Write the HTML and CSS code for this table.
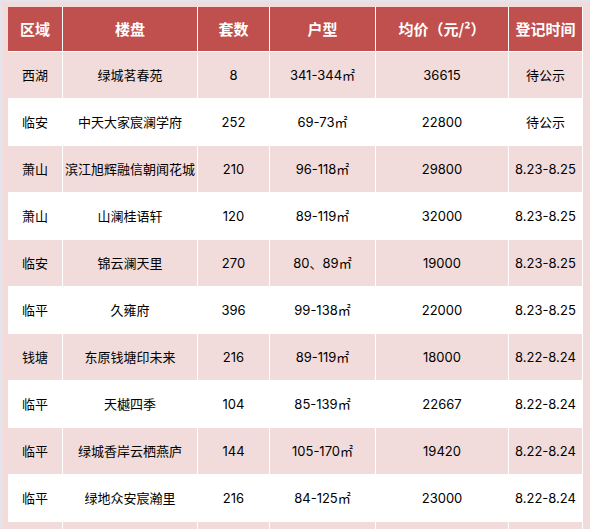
FILE: index.html
```html
<!DOCTYPE html>
<html lang="zh-CN">
<head>
<meta charset="utf-8">
<title>楼盘登记</title>
<link rel="stylesheet" href="styles.css">
</head>
<body>
<div class="page">
  <table class="grid">
    <colgroup>
      <col class="c1"><col class="c2"><col class="c3"><col class="c4"><col class="c5"><col class="c6">
    </colgroup>
    <thead>
      <tr><th>区域</th><th>楼盘</th><th>套数</th><th>户型</th><th>均价（元/²）</th><th>登记时间</th></tr>
    </thead>
    <tbody>
      <tr class="odd"><td>西湖</td><td>绿城茗春苑</td><td>8</td><td>341-344㎡</td><td>36615</td><td>待公示</td></tr>
      <tr><td>临安</td><td>中天大家宸澜学府</td><td>252</td><td>69-73㎡</td><td>22800</td><td>待公示</td></tr>
      <tr class="odd"><td>萧山</td><td>滨江旭辉融信朝闻花城</td><td>210</td><td>96-118㎡</td><td>29800</td><td>8.23-8.25</td></tr>
      <tr><td>萧山</td><td>山澜桂语轩</td><td>120</td><td>89-119㎡</td><td>32000</td><td>8.23-8.25</td></tr>
      <tr class="odd"><td>临安</td><td>锦云澜天里</td><td>270</td><td>80、89㎡</td><td>19000</td><td>8.23-8.25</td></tr>
      <tr><td>临平</td><td>久雍府</td><td>396</td><td>99-138㎡</td><td>22000</td><td>8.23-8.25</td></tr>
      <tr class="odd"><td>钱塘</td><td>东原钱塘印未来</td><td>216</td><td>89-119㎡</td><td>18000</td><td>8.22-8.24</td></tr>
      <tr><td>临平</td><td>天樾四季</td><td>104</td><td>85-139㎡</td><td>22667</td><td>8.22-8.24</td></tr>
      <tr class="odd"><td>临平</td><td>绿城香岸云栖燕庐</td><td>144</td><td>105-170㎡</td><td>19420</td><td>8.22-8.24</td></tr>
      <tr><td>临平</td><td>绿地众安宸瀚里</td><td>216</td><td>84-125㎡</td><td>23000</td><td>8.22-8.24</td></tr>
      <tr class="odd"><td>&nbsp;</td><td>&nbsp;</td><td>&nbsp;</td><td>&nbsp;</td><td>&nbsp;</td><td>&nbsp;</td></tr>
    </tbody>
  </table>
</div>
</body>
</html>
```
FILE: styles.css
```css
html, body {
  margin: 0;
  padding: 0;
}
body {
  background: #f2dcdb;
  overflow: hidden;
}
.page {
  border-top: 2px solid #e2e4ee;
  border-left: 2px solid #e2e4ee;
  background: #f2dcdb;
  padding: 5px 0 0 6px;
  min-height: 600px;
}
.grid {
  table-layout: fixed;
  width: 575px;
  border-collapse: separate;
  border-spacing: 0;
  font-family: Inter, "Noto Sans CJK SC", sans-serif;
  font-size: 13px;
  color: #000;
}
.c1 { width: 55px; }
.c2 { width: 135px; }
.c3 { width: 72px; }
.c4 { width: 106px; }
.c5 { width: 133px; }
.c6 { width: 74px; }
.grid th,
.grid td {
  padding: 0;
  text-align: center;
  white-space: nowrap;
  border-right: 1px solid #fff;
  border-bottom: 1px solid #fff;
  overflow: visible;
}
.grid th {
  background: #c0504d;
  color: #fff;
  font-family: "Noto Sans CJK SC", sans-serif;
  font-weight: bold;
  font-size: 15px;
  line-height: 44px;
  height: 44px;
}
.grid td {
  background: #fff;
  line-height: 46px;
  height: 46px;
}
.grid tr.odd td {
  background: #f2dcdb;
}
```
